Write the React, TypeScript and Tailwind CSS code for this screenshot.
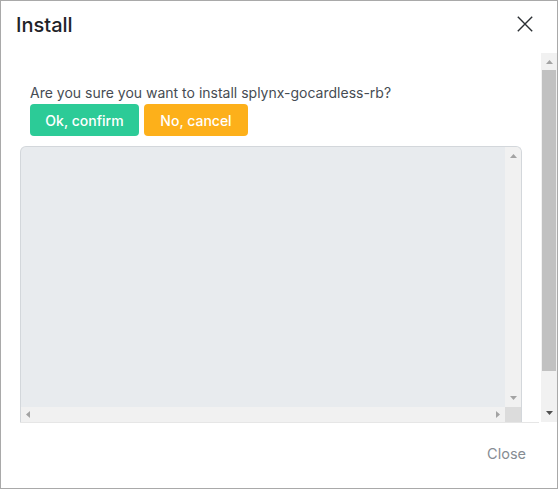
import React from "react";

const Tri = ({ dir, color }: { dir: "up" | "down" | "left" | "right"; color: string }) => {
  const pts: Record<string, string> = {
    up: "0,4 7,4 3.5,0",
    down: "0,0 7,0 3.5,4",
    left: "4,0 4,7 0,3.5",
    right: "0,0 0,7 4,3.5",
  };
  const vertical = dir === "up" || dir === "down";
  return (
    <svg width={vertical ? 7 : 4} height={vertical ? 4 : 7} viewBox={vertical ? "0 0 7 4" : "0 0 4 7"}>
      <polygon points={pts[dir]} fill={color} />
    </svg>
  );
};

export default function App() {
  return (
    <div
      className="w-[558px] h-[489px] border border-[#a9a9a9] bg-white flex flex-col overflow-hidden"
      style={{ fontFamily: "Inter, 'Noto Sans', sans-serif" }}
    >
      {/* Header */}
      <div className="h-[52px] shrink-0 flex items-start justify-between pl-[15px] pr-[24px] pt-[11px]">
        <div className="text-[20px] leading-[26px] font-medium text-[#1f2328]">Install</div>
        <svg width="16" height="16" viewBox="0 0 16 16" className="mt-[4px]">
          <path d="M0.8 0.8 L15.2 15.2 M15.2 0.8 L0.8 15.2" stroke="#2b2f33" strokeWidth="1.4" fill="none" />
        </svg>
      </div>

      {/* Body */}
      <div className="h-[370px] shrink-0 flex">
        <div className="w-[540px] overflow-hidden flex flex-col pt-[30px]">
          <div className="ml-[29px] text-[14px] leading-[20px] text-[#464c53]">
            Are you sure you want to install splynx-gocardless-rb?
          </div>
          <div className="ml-[29px] mt-[1px] flex gap-[5px]">
            <div className="w-[109px] h-[32px] rounded-[4px] bg-[#2ccb97] text-white text-[14px] font-medium flex items-center justify-center">
              Ok, confirm
            </div>
            <div className="w-[104px] h-[32px] rounded-[4px] bg-[#fdb01a] text-white text-[14px] font-medium flex items-center justify-center">
              No, cancel
            </div>
          </div>
          <div className="ml-[19px] mt-[10px] w-[502px] h-[276px] border border-b-0 border-[#d3d7db] rounded-t-[6px] overflow-hidden flex flex-col bg-[#e8ebee]">
            <div className="flex-1 flex">
              <div className="flex-1" />
              <div className="w-[16px] bg-[#f1f1f1] flex flex-col items-center justify-between pt-[7px] pb-[7px]">
                <Tri dir="up" color="#a3a3a3" />
                <Tri dir="down" color="#a3a3a3" />
              </div>
            </div>
            <div className="h-[15px] flex">
              <div className="flex-1 bg-[#f1f1f1] flex items-center justify-between px-[5px]">
                <Tri dir="left" color="#a3a3a3" />
                <Tri dir="right" color="#a3a3a3" />
              </div>
              <div className="w-[16px] bg-[#dcdcdc]" />
            </div>
          </div>
          <div className="ml-[19px] w-[519px] h-px bg-[#e6e6e6]" />
        </div>
        <div className="w-[16px] h-[369px] bg-[#f1f1f1] flex flex-col">
          <div className="h-[17px] flex items-center justify-center">
            <Tri dir="up" color="#a3a3a3" />
          </div>
          <div className="mx-[1px] h-[301px] bg-[#c1c1c1]" />
          <div className="flex-1 flex items-end justify-center pb-[7px]">
            <Tri dir="down" color="#505050" />
          </div>
        </div>
      </div>

      {/* Footer */}
      <div className="flex-1 flex justify-end pr-[31px] pt-[21px]">
        <div className="text-[14.5px] leading-[20px] text-[#868c93]">Close</div>
      </div>
    </div>
  );
}
